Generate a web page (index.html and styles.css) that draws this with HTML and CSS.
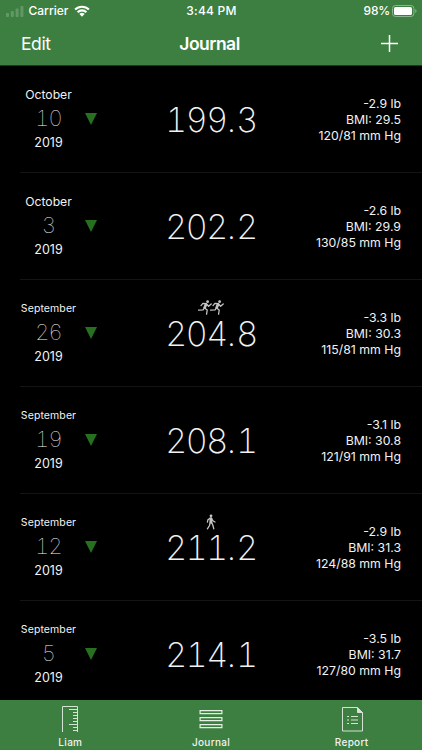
FILE: index.html
```
<!DOCTYPE html>
<html lang="en">
<head>
<meta charset="utf-8">
<title>Journal</title>
<link rel="stylesheet" href="styles.css">
</head>
<body>
<svg class="defs" width="0" height="0">
  <symbol id="runner" viewBox="0 0 14 15">
    <circle cx="9.6" cy="1.7" r="1.4" fill="currentColor"/>
    <path d="M8.6 3.6 4.9 3.4 3 5.6M8.7 4 6.5 8M9 4.5l1.6 1.8L13.2 4M6.3 7.8l-1.2 2-4.6.3M6.600 8l2.6 2-.6 4.2" fill="none" stroke="currentColor" stroke-width="1.3" stroke-linecap="round" stroke-linejoin="round"/>
    <path d="M6.800 3.400l2.700.7L7.700 8.800 5.200 7.800z" fill="currentColor"/>
  </symbol>
  <symbol id="walker" viewBox="0 0 10 16">
    <circle cx="5" cy="1.8" r="1.4" fill="currentColor"/>
    <path d="M4.7 4 2 5.6 1.4 8M5.6 4.2l1.2 2.5L9 8M4.2 8.6 3.5 11.5 1.4 14.8M5.6 8.6 6.8 11l1 3.8" fill="none" stroke="currentColor" stroke-width="1.3" stroke-linecap="round" stroke-linejoin="round"/>
    <path d="M3.6 3.6h2.400L6.400 9.400H3.400z" fill="currentColor"/>
  </symbol>
</svg>
<header class="top">
  <div class="status">
    <div class="carrier">
      <svg class="signal" width="18" height="12" viewBox="0 0 18 12" fill="#629867"><rect x="0" y="8" width="3" height="4" rx=".8"/><rect x="4.8" y="6" width="3" height="6" rx=".8"/><rect x="9.6" y="3.5" width="3" height="8.5" rx=".8"/><rect x="14.4" y="1" width="3" height="11" rx=".8"/></svg>
      <span>Carrier</span>
      <svg class="wifi" width="16" height="12" viewBox="0 0 16 12" fill="none" stroke="#fff" stroke-width="2.1"><path d="M1.1 4.6a9.8 9.8 0 0 1 13.8 0M3.6 7.2a6.2 6.2 0 0 1 8.8 0"/><path d="M5.4 9a3.7 3.7 0 0 1 5.2 0L8 11.7z" fill="#fff" stroke="none"/></svg>
    </div>
    <div class="time">3:44 PM</div>
    <div class="power"><span>98%</span>
      <svg width="25" height="12" viewBox="0 0 25 12"><rect x=".5" y=".5" width="21.4" height="11" rx="3" fill="none" stroke="#8db591"/><rect x="2" y="2" width="18" height="8" rx="1.6" fill="#fff"/><path d="M23.3 4v4q1.2-.7 1.2-2t-1.2-2" fill="#8db591"/></svg>
    </div>
  </div>
  <div class="nav">
    <span class="edit">Edit</span>
    <h1>Journal</h1>
    <svg class="plus" width="17" height="17" viewBox="0 0 17 17"><path d="M8.5 0v17M0 8.5h17" stroke="#fff" stroke-width="1.5"/></svg>
  </div>
</header>
<main>
  <section class="row">
    <div class="date"><span class="month">October</span><span class="day">10</span><span class="year">2019</span></div>
    <i class="down"></i>
    <div class="weight"><div class="act"></div><div class="num">199<span class="dot">.</span>3</div></div>
    <div class="info"><span>-2.9 lb</span><span>BMI: 29.5</span><span>120/81 mm Hg</span></div>
  </section>
  <section class="row">
    <div class="date"><span class="month">October</span><span class="day">3</span><span class="year">2019</span></div>
    <i class="down"></i>
    <div class="weight"><div class="act"></div><div class="num">202<span class="dot">.</span>2</div></div>
    <div class="info"><span>-2.6 lb</span><span>BMI: 29.9</span><span>130/85 mm Hg</span></div>
  </section>
  <section class="row">
    <div class="date"><span class="month long">September</span><span class="day">26</span><span class="year">2019</span></div>
    <i class="down"></i>
    <div class="weight"><div class="act"><svg width="14" height="15"><use href="#runner"/></svg><svg class="second" width="14" height="15"><use href="#runner"/></svg></div><div class="num">204<span class="dot">.</span>8</div></div>
    <div class="info"><span>-3.3 lb</span><span>BMI: 30.3</span><span>115/81 mm Hg</span></div>
  </section>
  <section class="row">
    <div class="date"><span class="month long">September</span><span class="day">19</span><span class="year">2019</span></div>
    <i class="down"></i>
    <div class="weight"><div class="act"></div><div class="num">208<span class="dot">.</span>1</div></div>
    <div class="info"><span>-3.1 lb</span><span>BMI: 30.8</span><span>121/91 mm Hg</span></div>
  </section>
  <section class="row">
    <div class="date"><span class="month long">September</span><span class="day">12</span><span class="year">2019</span></div>
    <i class="down"></i>
    <div class="weight"><div class="act"><svg width="10" height="16"><use href="#walker"/></svg></div><div class="num">211<span class="dot">.</span>2</div></div>
    <div class="info"><span>-2.9 lb</span><span>BMI: 31.3</span><span>124/88 mm Hg</span></div>
  </section>
  <section class="row last">
    <div class="date"><span class="month long">September</span><span class="day">5</span><span class="year">2019</span></div>
    <i class="down"></i>
    <div class="weight"><div class="act"></div><div class="num">214<span class="dot">.</span>1</div></div>
    <div class="info"><span>-3.5 lb</span><span>BMI: 31.7</span><span>127/80 mm Hg</span></div>
  </section>
</main>
<footer class="tabs">
  <div class="tab">
    <svg width="28" height="30" viewBox="0 0 28 30" fill="none" stroke="#d3e4d4"><path d="M6.5 27V1.5h15V27M13 4.5h8.5M17 7.5h4.5M17 10.5h4.5M17 13.5h4.5M17 16.5h4.5M13 19.5h8.5M17 22.5h4.5M17 25.5h4.5"/></svg>
    <span>Liam</span>
  </div>
  <div class="tab">
    <svg width="28" height="30" viewBox="0 0 28 30" fill="none" stroke="#e3f0e3" stroke-width="1.2"><path d="M3.1 5.6h21.8v3H3.1zM3.1 12.6h21.8v3H3.1zM3.1 19.6h21.8v3H3.1z"/></svg>
    <span>Journal</span>
  </div>
  <div class="tab">
    <svg width="28" height="30" viewBox="0 0 28 30" fill="none" stroke="#d3e4d4"><path d="M4.5 2.5h15l5 5v18.500h-20z"/><path d="M19.500 2.500v5h5z" fill="#d3e4d4"/><path d="M9 11.500h2M13 11.500h7M9 15h2M13 15h7M9 18.500h2M13 18.500h7"/></svg>
    <span>Report</span>
  </div>
</footer>
</body>
</html>
```
FILE: styles.css
```
* { box-sizing: border-box; }
body {
  margin: 0;
  width: 422px;
  height: 750px;
  overflow: hidden;
  display: flex;
  flex-direction: column;
  background: #000;
  color: #f2f2f2;
  font-family: Inter, "Liberation Sans", sans-serif;
}
.defs { display: none; }
svg { display: block; flex: none; }
.top {
  height: 66px;
  background: #3c7f40;
  border-bottom: 1px solid #1b3a1d;
  color: #fff;
}
.status, .nav {
  display: grid;
  grid-template-columns: 1fr auto 1fr;
  align-items: center;
}
.status {
  height: 21px;
  padding: 0 5px 0 6px;
  font-size: 12px;
  font-weight: 500;
}
.carrier, .power { display: flex; align-items: center; }
.carrier { gap: 4.500px; }
.carrier .wifi { margin-left: 1px; }
.power { justify-content: flex-end; gap: 2px; letter-spacing: -.2px; }
.time { letter-spacing: .25px; }
.nav { height: 44px; padding: 0 24px 0 21px; }
.edit { font-size: 17.500px; letter-spacing: -.4px; }
h1 { margin: 0; font-size: 17.500px; font-weight: 600; letter-spacing: -.5px; }
.plus { justify-self: end; }
main { height: 634px; }
.row {
  height: 107px;
  display: grid;
  grid-template-columns: 57px 12px 1fr 76px;
  padding: 0 21px 0 20px;
  column-gap: 8px;
  background: linear-gradient(#141414, #141414) 20px 100% / 100% 1px no-repeat;
}
.row.last { height: 99px; background: none; }
.date {
  display: flex;
  flex-direction: column;
  align-items: center;
  padding-top: 21px;
  white-space: nowrap;
}
.month, .year { font-size: 12.500px; line-height: 16px; }
.month { font-size: 12.200px; letter-spacing: 0; }
.long { font-size: 10.500px; letter-spacing: .1px; line-height: 15px; padding-bottom: 1px; }
.day {
  margin: 3px 0 5px;
  font-size: 22px;
  font-weight: 100;
  line-height: 24px;
  font-variant-numeric: tabular-nums;
  letter-spacing: -.9px;
  padding-right: 0;
}
.down {
  width: 12px;
  height: 12px;
  margin-top: 47px;
  background: #267020;
  clip-path: polygon(0 0, 100% 0, 50% 100%);
}
.weight { display: flex; flex-direction: column; align-items: center; }
.act { display: flex; justify-content: center; height: 36px; padding-top: 20px; color: #c4c4c4; }
.second { margin-left: -2px; }
.num {
  display: flex;
  font-size: 34px;
  font-weight: 200;
  line-height: 36px;
  font-variant-numeric: tabular-nums;
  letter-spacing: -1.500px;
}
.dot {
  width: 9.500px;
  text-align: center;
  font-variant-numeric: normal;
  letter-spacing: 0;
}
.info {
  display: flex;
  flex-direction: column;
  align-items: flex-end;
  padding-top: 29.500px;
  font-size: 12.300px;
  line-height: 16px;
  white-space: nowrap;
}
.tabs {
  height: 50px;
  display: grid;
  grid-template-columns: repeat(3, 1fr);
  background: #3c7f40;
}
.tab {
  display: flex;
  flex-direction: column;
  align-items: center;
  padding-top: 6px;
  font-size: 10px;
  font-weight: 500;
  line-height: 13px;
  letter-spacing: .3px;
}
.tab svg { margin: -1px 0 0; }
.tab span { margin-top: 1px; }
```
